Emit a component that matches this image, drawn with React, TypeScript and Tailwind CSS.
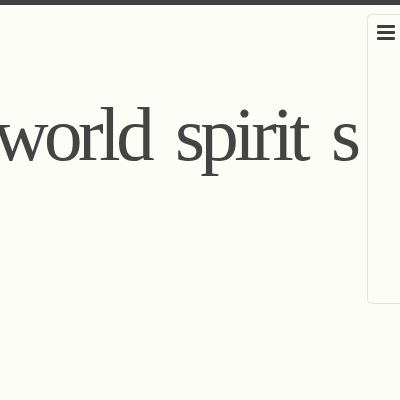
import React from 'react';

const MenuBars: React.FC = () => (
    <div className="flex flex-col gap-[3px] w-[18px]">
        <div className="h-[3px] bg-[#3d3d3d] rounded-[1px]" />
        <div className="h-[3px] bg-[#3d3d3d] rounded-[1px]" />
        <div className="h-[3px] bg-[#3d3d3d] rounded-[1px]" />
    </div>
);

const App: React.FC = () => {
    return (
        <div className="w-[400px] h-[400px] bg-[#fdfdf7] overflow-hidden flex flex-col">
            <div className="h-[5px] bg-[#404040] shrink-0" />
            <div className="flex flex-1 min-h-0">
                <main className="flex-1 min-w-0 overflow-hidden">
                    <h1
                        className="mt-[91px] ml-[-7px] whitespace-nowrap text-[77px] leading-none tracking-[-4.5px] [word-spacing:10px] text-[#444444]"
                        style={{ fontFamily: '"Liberation Serif", "DejaVu Serif", serif' }}
                    >
                        world spirit s
                    </h1>
                </main>
                <aside className="w-[33px] h-[290px] mt-[9px] shrink-0 border border-r-0 border-[#e4e4de] rounded-l-[5px] pt-[10px] pl-[9px]">
                    <MenuBars />
                </aside>
            </div>
        </div>
    );
};

export default App;
